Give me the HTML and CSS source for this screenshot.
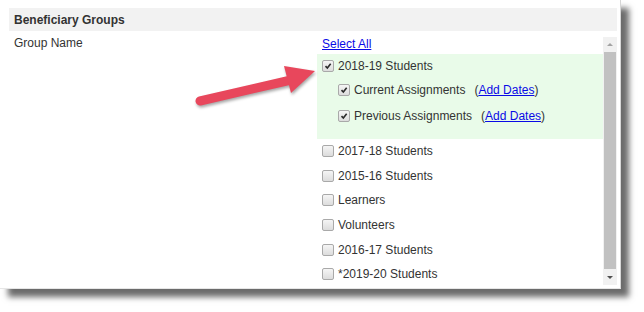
FILE: index.html
```html
<!DOCTYPE html>
<html>
<head>
    <meta charset='utf-8'>
    <title>Beneficiary Groups</title>
    <link rel="stylesheet" href="styles.css">
</head>
<body>
    <div class="panel">
        <div class="naglowek">Beneficiary Groups</div>
        <div class="wiersz">
            <div class="etykieta">Group Name</div>
            <div class="pudlo">
                <div class="lista">
                    <div class="zaznacz"><a href="#">Select All</a></div>
                    <div class="grupa">
                        <div class="pozycja glowna"><span class="cb on"><svg viewBox="0 0 12 12"><path d="M3 6.2 L5.2 8.5 L9.2 3.2"/></svg></span>2018-19 Students</div>
                        <div class="pozycja pod"><span class="cb on"><svg viewBox="0 0 12 12"><path d="M3 6.2 L5.2 8.5 L9.2 3.2"/></svg></span>Current Assignments<span class="daty">(<a href="#">Add Dates</a>)</span></div>
                        <div class="pozycja pod"><span class="cb on"><svg viewBox="0 0 12 12"><path d="M3 6.2 L5.2 8.5 L9.2 3.2"/></svg></span>Previous Assignments<span class="daty">(<a href="#">Add Dates</a>)</span></div>
                    </div>
                    <div class="pozycja"><span class="cb"></span>2017-18 Students</div>
                    <div class="pozycja"><span class="cb"></span>2015-16 Students</div>
                    <div class="pozycja"><span class="cb"></span>Learners</div>
                    <div class="pozycja"><span class="cb"></span>Volunteers</div>
                    <div class="pozycja"><span class="cb"></span>2016-17 Students</div>
                    <div class="pozycja"><span class="cb"></span>*2019-20 Students</div>
                </div>
                <div class="suwak">
                    <div class="strzalka gora"></div>
                    <div class="kciuk"></div>
                    <div class="strzalka dol"></div>
                </div>
            </div>
        </div>
    </div>
    <svg class="wskaznik" viewBox="185 55 140 60" width="140" height="60">
        <line x1="200" y1="101" x2="291" y2="80" stroke="#e8475c" stroke-width="9" stroke-linecap="round"/>
        <polygon points="284,66 315,71 291,93" fill="#e8475c"/>
    </svg>
</body>
</html>
```

FILE: styles.css
```css
html, body {
    margin: 0;
    background-color: white;
    font-family: "Liberation Sans", Arial, sans-serif;
    font-size: 12px;
    color: #333;
}
body {
    padding-bottom: 23px;
}
.panel {
    position: relative;
    box-sizing: border-box;
    width: 621px;
    height: 289px;
    padding: 8px 0 0 9px;
    background-color: white;
    border-right: 1px solid #d6d6d6;
    border-bottom: 1px solid #e6e6e6;
    box-shadow: 8px 8px 6px rgba(0, 0, 0, 0.58);
}
.naglowek {
    width: 608px;
    height: 23px;
    line-height: 24px;
    padding-left: 5px;
    box-sizing: border-box;
    background-color: #f2f2f2;
    font-weight: bold;
}
.wiersz {
    display: flex;
}
.etykieta {
    width: 308px;
    box-sizing: border-box;
    padding: 5px 0 0 5px;
    line-height: 14px;
}
.pudlo {
    display: flex;
    width: 300px;
    height: 248px;
    margin-top: 6px;
}
.lista {
    flex: 1;
    padding-top: 1px;
}
.zaznacz {
    height: 16px;
    line-height: 13px;
    padding-left: 5px;
}
a {
    color: #0a0ae6;
}
.grupa {
    background-color: #e9fbe9;
    padding: 1px 0 10px;
}
.pozycja {
    display: flex;
    align-items: center;
    height: 24.6px;
    padding-left: 5px;
}
.pozycja.glowna {
    height: 22px;
}
.pozycja.pod {
    height: 26px;
    padding-left: 21px;
}
.daty {
    margin-left: 9px;
}
.cb {
    display: inline-block;
    box-sizing: border-box;
    width: 12px;
    height: 12px;
    margin-right: 4px;
    border: 1px solid #a9a9a9;
    border-radius: 2px;
    background: linear-gradient(#f5f5f5, #dcdcdc);
}
.cb svg {
    display: block;
    width: 10px;
    height: 10px;
    fill: none;
    stroke: #2b2b2b;
    stroke-width: 1.9;
}
.suwak {
    display: flex;
    flex-direction: column;
    width: 14px;
    background-color: #f1f1f1;
}
.strzalka {
    position: relative;
    height: 15px;
}
.strzalka::after {
    content: "";
    position: absolute;
    left: 4px;
    top: 6px;
    border-left: 3px solid transparent;
    border-right: 3px solid transparent;
}
.gora::after {
    border-bottom: 3px solid #a3a3a3;
}
.dol {
    height: 16px;
}
.dol::after {
    top: 7px;
    border-top: 3px solid #505050;
}
.kciuk {
    flex: 1;
    margin: 0 1px;
    background-color: #c1c1c1;
}
.wskaznik {
    position: absolute;
    left: 185px;
    top: 55px;
    filter: drop-shadow(1px 2px 1.5px rgba(0, 0, 0, 0.35));
}
```
